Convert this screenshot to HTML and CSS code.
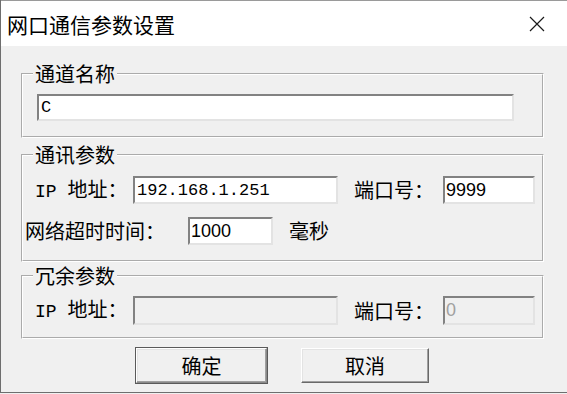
FILE: index.html
```html
<!DOCTYPE html>
<html lang="zh-CN">
<head>
    <meta charset="UTF-8">
    <meta name="viewport" content="width=device-width, initial-scale=1.0">
    <title>网口通信参数设置</title>
    <link rel="stylesheet" href="styles.css">
</head>
<body>
    <div class="window">
        <div class="titlebar">
            <span class="title">网口通信参数设置</span>
            <svg class="close" width="16" height="16" viewBox="0 0 16 16">
                <path d="M1 1 L15 15 M15 1 L1 15" stroke="#1a1a1a" stroke-width="1.2" fill="none"/>
            </svg>
        </div>
        <div class="content">
            <fieldset class="group group-name">
                <legend>通道名称</legend>
                <input class="field name-field" type="text" value="C">
            </fieldset>

            <fieldset class="group group-comm">
                <legend>通讯参数</legend>
                <div class="row row-ip">
                    <label class="lbl lbl-ip"><span class="latin">IP </span>地址：</label>
                    <input class="field ip-field" type="text" value="192.168.1.251">
                    <label class="lbl lbl-port">端口号：</label>
                    <input class="field port-field" type="text" value="9999">
                </div>
                <div class="row row-timeout">
                    <label class="lbl lbl-timeout">网络超时时间：</label>
                    <input class="field timeout-field" type="text" value="1000">
                    <span class="lbl unit">毫秒</span>
                </div>
            </fieldset>

            <fieldset class="group group-backup">
                <legend>冗余参数</legend>
                <div class="row row-ip">
                    <label class="lbl lbl-ip"><span class="latin">IP </span>地址：</label>
                    <input class="field ip-field" type="text" value="" disabled>
                    <label class="lbl lbl-port">端口号：</label>
                    <input class="field port-field" type="text" value="0" disabled>
                </div>
            </fieldset>

            <div class="buttons">
                <button class="btn btn-default">确定</button>
                <button class="btn">取消</button>
            </div>
        </div>
    </div>
</body>
</html>
```

FILE: styles.css
```css
body {
    margin: 0;
    background: #f0f0f0;
    font-family: "Noto Sans CJK SC", sans-serif;
}
.window {
    width: 566px;
    height: 392px;
    border-left: 1px solid #6e6e6e;
    border-bottom: 1px solid #6e6e6e;
    background: #f0f0f0;
}
.titlebar {
    height: 45px;
    border-top: 1px solid #9a9a9a;
    background: #ffffff;
    display: flex;
    align-items: center;
    justify-content: space-between;
    padding: 0 22px 0 6px;
}
.title {
    font-size: 21px;
    color: #000;
    line-height: 24px;
}
.close {
    display: block;
}
.content {
    display: flex;
    flex-direction: column;
}
.group {
    margin: 0 23px 0 20px;
    padding: 0;
    border: 2px groove #ffffff;
    min-width: 0;
}
.group legend {
    margin-left: 10px;
    padding: 0 2px;
    font-size: 20px;
    line-height: 20px;
    color: #000;
}
.group-name {
    margin-top: 18px;
    padding-bottom: 15px;
}
.group-comm {
    margin-top: 7px;
    padding-bottom: 15px;
}
.group-backup {
    margin-top: 4px;
    padding-bottom: 12px;
}
.field {
    box-sizing: border-box;
    height: 28px;
    margin: 0;
    border: 2px solid;
    border-color: #828282 #e3e3e3 #e3e3e3 #828282;
    background: #ffffff;
    padding: 0 2px;
    color: #000;
    outline: none;
}
.field:disabled {
    background: #f0f0f0;
    color: #a0a0a0;
}
.name-field {
    margin: 10px 0 0 14px;
    width: 477px;
    height: 27px;
    font-family: "Liberation Mono", monospace;
    font-size: 17px;
}
.row {
    display: flex;
    align-items: center;
}
.row-ip {
    padding-left: 12px;
    margin-top: 11px;
}
.group-backup .row-ip {
    margin-top: 10px;
}
.group-backup .field {
    height: 29px;
}
.row-timeout {
    padding-left: 2px;
    margin-top: 13px;
}
.lbl {
    font-size: 20px;
    line-height: 24px;
    color: #000;
    white-space: pre;
}
.latin {
    font-family: "Liberation Mono", monospace;
    font-size: 18px;
}
.lbl-ip {
    width: 98px;
}
.ip-field {
    width: 205px;
    font-family: "Liberation Mono", monospace;
    font-size: 17px;
}
.lbl-port {
    margin-left: 16px;
    width: 89px;
}
.port-field {
    width: 92px;
    padding-left: 1px;
    font-family: "Liberation Sans", sans-serif;
    font-size: 18px;
}
.lbl-timeout {
    width: 163px;
}
.timeout-field {
    width: 85px;
    padding-left: 1px;
    font-family: "Liberation Sans", sans-serif;
    font-size: 18px;
}
.unit {
    margin-left: 16px;
}
.buttons {
    display: flex;
    gap: 34px;
    padding-left: 135px;
    margin-top: 9px;
}
.btn {
    box-sizing: border-box;
    height: 35px;
    width: 128px;
    margin: 0;
    padding: 0;
    font-family: "Noto Sans CJK SC", sans-serif;
    font-size: 20px;
    color: #000;
    background: #f0f0f0;
    border: 1px solid;
    border-color: #ffffff #696969 #696969 #ffffff;
    box-shadow: inset -1px -1px 0 #a0a0a0, inset 1px 1px 0 #e3e3e3;
}
.btn-default {
    width: 131px;
    outline: 1px solid #5a5a5a;
    outline-offset: 0;
    border-color: #ffffff #8a8a8a #8a8a8a #ffffff;
}
```
